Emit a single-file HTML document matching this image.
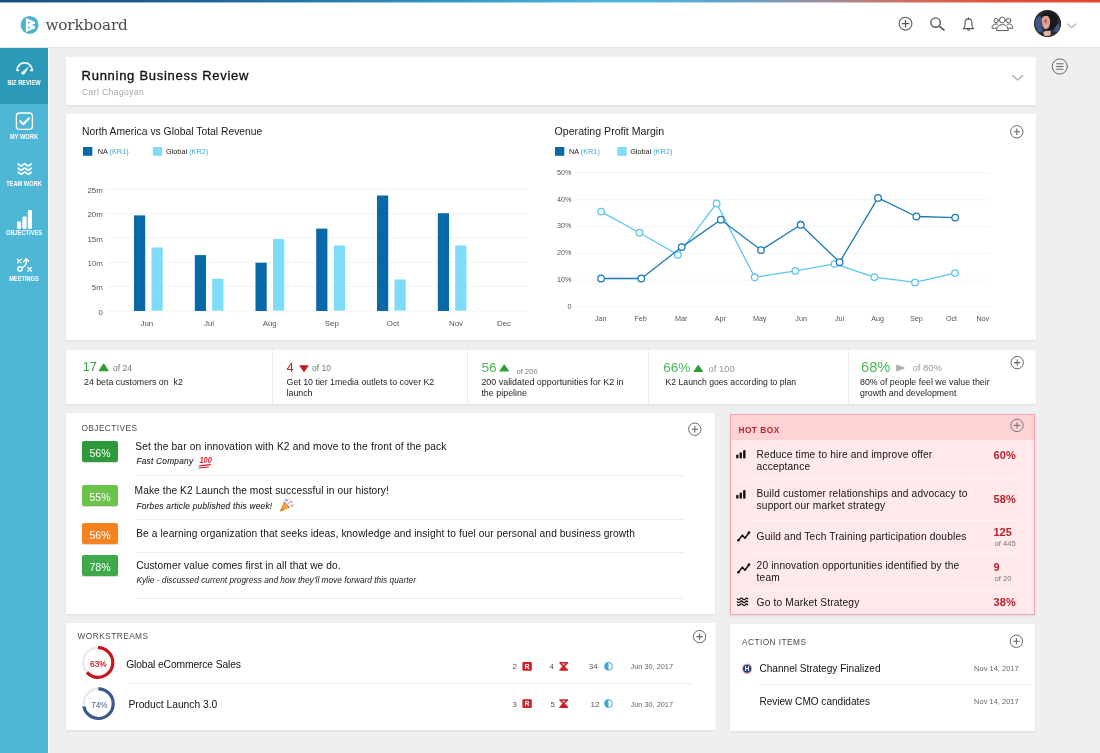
<!DOCTYPE html>
<html lang="en">
<head>
<meta charset="utf-8">
<title>Workboard - Running Business Review</title>
<style>
*{box-sizing:border-box;margin:0;padding:0}
html,body{width:1100px;height:753px;overflow:hidden}
body{background:#edeff1;font-family:"Liberation Sans",sans-serif;color:#222;position:relative}
.abs{position:absolute}
.t{position:absolute;white-space:nowrap;line-height:1}
#stripe{position:absolute;left:0;top:0;width:1100px;height:3px;background:linear-gradient(180deg,rgba(255,255,255,0) 2px,rgba(255,255,255,.55) 2px),linear-gradient(90deg,#174f80 0%,#1d6296 18%,#2c8abc 36%,#49b5dc 54%,#55aed6 62%,#6a9fc4 68%,#9a8e9c 75%,#cf6f60 82%,#e2503c 90%,#e8432c 100%)}
#header{position:absolute;left:0;top:3px;width:1100px;height:44px;background:#fff;box-shadow:0 1px 1px rgba(0,0,0,.04)}
#side{position:absolute;left:0;top:48px;width:48px;height:705px;background:#4fb7d6;box-shadow:1.500px 0 0 #f9fbfc}
#side .act{position:absolute;left:0;top:0;width:48px;height:56px;background:#2b9ab9}
.nav{position:absolute;left:0;width:48px;text-align:center;color:#fff;font-size:6.4px;font-weight:700;letter-spacing:0;transform:scaleX(.89);line-height:1;white-space:nowrap}
.panel{position:absolute;background:#fff;box-shadow:0 1px 2px rgba(0,0,0,.07)}
.kd{font-size:8.800px;line-height:10.500px;color:#1e1e1e}
.ko{color:#777}
.sh{font-size:8.300px;letter-spacing:.45px;color:#4a4a4a}
.bdg{position:absolute;left:82px;width:36px;height:21px;border-radius:2px;color:#fff;font-size:10.500px;line-height:24px;overflow:hidden;text-align:center;box-shadow:0 1px 1px rgba(0,0,0,.15)}
.ot{font-size:10.200px;letter-spacing:.15px;color:#141414}
.oi{font-size:8.300px;letter-spacing:.25px;font-style:italic;color:#222;-webkit-text-stroke:.1px #222}
.oi2{font-size:8.340px;font-style:italic;color:#222}
.hr{position:absolute;height:1px;background:#ededed}
.hr2{position:absolute;left:751px;width:269px;height:1px;background:#fff6f6}
.ht{font-size:10.200px;letter-spacing:.15px;line-height:12px;color:#141414}
.hp{font-size:11px;font-weight:700;color:#b8222e}
.hs{font-size:7.700px;color:#777}
</style>
</head>
<body>
<div id="root" style="position:absolute;left:0;top:0;width:1100px;height:753px;will-change:transform">
<div id="stripe"></div>
<div id="header"></div>
<!-- logo -->
<svg class="abs" style="left:19px;top:14px" width="22" height="22" viewBox="0 0 22 22">
  <circle cx="10.650" cy="10.900" r="9" fill="#4bb2d2"/>
  <path d="M6.900 3.900L16 8.100V9.700L12.600 11L16 12.300V14.200L6.900 18Z" fill="#fff"/>
  <path d="M8.900 7.700L12 8.750L8.900 9.700ZM8.900 12.500L12 13.400L8.900 14.500Z" fill="#4bb2d2"/>
</svg>
<div class="t" id="brand" style="left:45.5px;top:17.6px;font-family:'DejaVu Serif',serif;font-size:15.2px;color:#4a4a4a;letter-spacing:-0.15px">workboard</div>
<!-- header icons -->
<svg class="abs" style="left:890px;top:5px" width="200" height="40" viewBox="890 5 200 40" fill="none" stroke="#5a5a5a" stroke-width="1.1" stroke-linecap="round" stroke-linejoin="round">
  <circle cx="905.5" cy="23.7" r="6.4"/>
  <path d="M902.2 23.7H908.8M905.5 20.4V27" stroke-width="1.3"/>
  <circle cx="935.6" cy="22.6" r="4.7" stroke-width="1.4"/>
  <path d="M939.2 26.2L944 30" stroke-width="1.6"/>
  <path d="M963.3 28.6H973.7C972.3 27.6 971.9 26.3 971.9 24.6V22.6C971.9 20.4 970.5 18.9 968.5 18.9C966.5 18.9 965.1 20.4 965.1 22.6V24.6C965.1 26.3 964.7 27.6 963.3 28.6Z"/>
  <path d="M968.5 18.9V17.8M967.4 29.6C967.7 30.3 969.3 30.3 969.6 29.6"/>
  <g stroke-width="1">
  <circle cx="1002.4" cy="20" r="2.9"/>
  <path d="M996.6 30.2C996.6 26.6 998.8 24.6 1002.4 24.6C1006 24.6 1008.2 26.6 1008.2 30.2Z"/>
  <circle cx="996.2" cy="20.6" r="2.2"/>
  <path d="M997.4 24.3C996.9 24.1 996.5 24 996 24C993.4 24 992 25.6 992 28.2H996.2"/>
  <circle cx="1008.6" cy="20.6" r="2.2"/>
  <path d="M1007.4 24.3C1007.9 24.1 1008.3 24 1008.8 24C1011.4 24 1012.8 25.6 1012.8 28.2H1008.6"/>
  </g>
  <path d="M1067.6 24L1071.7 27.8L1075.8 24" stroke="#b9b9b9" stroke-width="1.3"/>
</svg>
<!-- avatar -->
<svg class="abs" style="left:1034.100px;top:9.900px;border-radius:50%;overflow:hidden" width="27.200" height="27.200" viewBox="0.100 0.100 27.200 27.200">
  <g>
    <rect width="28" height="28" fill="#2e2d31"/>
    <path d="M1.200 9.500C2.500 7.500 5 6 7.600 6.600L7 12L8.400 17.500L9 21.600L4.600 22.400C2.600 20 .8 14 1.200 9.500Z" fill="#3f5689"/>
    <path d="M24.800 13.400L26.400 19.600L23 22.600L19.400 21.200L22 16Z" fill="#3f5689"/>
    <path d="M7.800 9C8.400 6.600 11 5.400 13.600 5.800C16 7 16.600 10 16.300 13C16 16 14.800 18.400 12.400 19.200C10.600 19.400 9.400 18 8.800 16C8 14 7.400 11 7.800 9Z" fill="#dba08f"/>
    <path d="M9.400 22L12 21.200L16.800 20.600L16.600 25.600L10.400 26.400Z" fill="#e6b1a6"/>
    <path d="M7 8C7.400 3.600 12 .9 16.400 1.500C21 2.200 24 6 23.600 11C23.300 15 21 18.600 17.400 20.400L13.400 20.600L15.600 17C17 13.600 17 9.400 14.600 6.400C12 5.400 9 6.200 7 8Z" fill="#19181a"/>
    <path d="M10.200 10.200L13.400 9.600L12.300 13.600L10.800 12.600Z" fill="#b0362f" opacity=".7"/>
    <path d="M9.800 15.600C11 16.800 13 16.600 14 15.400" stroke="#fff" stroke-width=".7" fill="none" opacity=".7"/>
  </g>
  <circle cx="13.700" cy="13.700" r="13.200" fill="none" stroke="#333236" stroke-width=".9"/>
</svg>
<div id="side"><div class="act"></div></div>
<svg class="abs" style="left:0;top:48px" width="48" height="240" viewBox="0 48 48 240" fill="none" stroke="#fff" stroke-width="1.5" stroke-linecap="round" stroke-linejoin="round">
  <!-- gauge -->
  <path d="M18.600 70.400H16.900A7.700 7.700 0 0 1 32.300 70.400H30.600" stroke-width="1.600"/>
  <path d="M19.500 66.300l-.9-.6M21.900 64.100l-.5-.9M24.600 63.500v-1M27.400 64.100l.5-.9M29.800 66.300l.9-.6" stroke-width=".9"/>
  <path d="M28.300 67.400L24.300 74C23.500 75.200 21 74 21.700 72.500Z" fill="#fff" stroke-width=".5"/>
  <!-- check -->
  <rect x="16.400" y="113" width="16" height="16.400" rx="3.200" stroke-width="1.300"/>
  <path d="M20.300 121.200L23.300 124.200L29 118.200" stroke-width="2"/>
  <!-- waves -->
  <g stroke-width="1.700" stroke-linecap="butt">
  <path d="M17.500 163.9C18.700 163.9 19.900 166.0 21.100 166.0S23.500 163.9 24.700 163.9S27.100 166.0 28.300 166.0S30.700 163.9 31.800 163.9"/>
  <path d="M17.500 168.0C18.700 168.0 19.900 170.1 21.100 170.1S23.500 168.0 24.700 168.0S27.100 170.1 28.300 170.1S30.700 168.0 31.800 168.0"/>
  <path d="M17.500 172.1C18.700 172.1 19.900 174.2 21.100 174.2S23.500 172.1 24.700 172.1S27.100 174.2 28.300 174.2S30.700 172.1 31.800 172.1"/>
  </g>
  <!-- bars -->
  <g fill="#fff" stroke="none">
  <rect x="17" y="221.600" width="4.2" height="7.400" rx="1.4"/>
  <rect x="22.4" y="216.400" width="4.2" height="12.600" rx="1.4"/>
  <rect x="27.800" y="210" width="4.2" height="19" rx="1.4"/>
  </g>
  <!-- meetings -->
  <g stroke-width="1.400">
  <path d="M17.500 259.200l3.600 3.600M21.100 259.200l-3.600 3.600"/>
  <path d="M27.900 267.400l3.600 3.600M31.500 267.400l-3.600 3.600"/>
  <circle cx="20" cy="268.900" r="2.100"/>
  <path d="M21.900 267.800C25.400 266.400 26.900 263.600 26.300 259.400"/>
  <path d="M23.700 261.600L26.200 258.700L28.700 261.200"/>
  </g>
</svg>
<div class="nav" style="top:80px">BIZ REVIEW</div>
<div class="nav" style="top:134.400px">MY WORK</div>
<div class="nav" style="top:181.100px">TEAM WORK</div>
<div class="nav" style="top:230.200px">OBJECTIVES</div>
<div class="nav" style="top:276.400px">MEETINGS</div>

<!-- title panel -->
<div class="panel" style="left:66px;top:57px;width:970px;height:48px"></div>
<div class="t" id="ttl" style="left:81.6px;top:69px;font-size:13px;letter-spacing:.72px;color:#111;-webkit-text-stroke:.32px #111">Running Business Review</div>
<div class="t" id="sub" style="left:82px;top:87.6px;font-size:8.5px;letter-spacing:.42px;color:#a6a6a6">Carl Chagoyan</div>
<svg class="abs" style="left:1010px;top:58px" width="70" height="30" viewBox="1010 58 70 30" fill="none" stroke-linecap="round" stroke-linejoin="round">
  <path d="M1012.800 75.600L1017.700 80L1022.600 75.600" stroke="#b5b5b5" stroke-width="1.600"/>
  <circle cx="1059.8" cy="66.5" r="7.6" stroke="#666" stroke-width="1"/>
  <path d="M1056.6 63.8H1063M1056.6 66.5H1063M1056.6 69.200H1063" stroke="#666" stroke-width="1"/>
</svg>
<!-- charts panel -->
<div class="panel" style="left:66px;top:114px;width:970px;height:226px"></div>
<svg class="abs" id="charts" style="left:66px;top:114px" width="970" height="226" viewBox="66 114 970 226" font-family="Liberation Sans, sans-serif">
  <text x="82" y="134.800" font-size="10.350" fill="#1c1c1c">North America vs Global Total Revenue</text>
  <rect x="83" y="147" width="9.300" height="8.800" fill="#0869a8"/>
  <text x="97.800" y="154.400" font-size="7.300" fill="#222">NA <tspan fill="#3aa7d8">(KR1)</tspan></text>
  <rect x="152.800" y="147" width="9.300" height="8.800" fill="#7cdcf9"/>
  <text x="166" y="154.400" font-size="7.300" fill="#222">Global <tspan fill="#3aa7d8">(KR2)</tspan></text>
  <g stroke="#f2f2f2" stroke-width="1" fill="none"><path d="M108 310.9H528"/><path d="M108 286.6H528"/><path d="M108 262.3H528"/><path d="M108 237.9H528"/><path d="M108 213.6H528"/><path d="M108 189.3H528"/></g>
  <g font-size="7.900" fill="#555"><text x="102.800" y="314.5" text-anchor="end">0</text><text x="102.800" y="290.2" text-anchor="end">5m</text><text x="102.800" y="265.9" text-anchor="end">10m</text><text x="102.800" y="241.5" text-anchor="end">15m</text><text x="102.800" y="217.2" text-anchor="end">20m</text><text x="102.800" y="192.9" text-anchor="end">25m</text><text x="146.9" y="326" text-anchor="middle">Jun</text><text x="209" y="326" text-anchor="middle">Jul</text><text x="269.7" y="326" text-anchor="middle">Aug</text><text x="331.8" y="326" text-anchor="middle">Sep</text><text x="393" y="326" text-anchor="middle">Oct</text><text x="456" y="326" text-anchor="middle">Nov</text><text x="504" y="326" text-anchor="middle">Dec</text></g>
  <rect x="134.0" y="215.4" width="11.2" height="95.6" fill="#0869a8"/><rect x="151.5" y="247.5" width="11.2" height="63.1" fill="#7cdcf9"/><rect x="194.8" y="255.1" width="11.2" height="55.9" fill="#0869a8"/><rect x="212.2" y="278.8" width="11.2" height="31.8" fill="#7cdcf9"/><rect x="255.5" y="262.7" width="11.2" height="48.3" fill="#0869a8"/><rect x="273.0" y="239.1" width="11.2" height="71.5" fill="#7cdcf9"/><rect x="316.2" y="228.6" width="11.2" height="82.4" fill="#0869a8"/><rect x="333.8" y="245.5" width="11.2" height="65.1" fill="#7cdcf9"/><rect x="377.0" y="195.5" width="11.2" height="115.5" fill="#0869a8"/><rect x="394.5" y="279.5" width="11.2" height="31.1" fill="#7cdcf9"/><rect x="437.8" y="213.2" width="11.2" height="97.8" fill="#0869a8"/><rect x="455.2" y="245.5" width="11.2" height="65.1" fill="#7cdcf9"/>
  <text x="554.600" y="134.800" font-size="10.600" fill="#1c1c1c">Operating Profit Margin</text>
  <rect x="555" y="147" width="9.300" height="8.800" fill="#0869a8"/>
  <text x="569" y="154.400" font-size="7.300" fill="#222">NA <tspan fill="#3aa7d8">(KR1)</tspan></text>
  <rect x="617.300" y="147" width="9.300" height="8.800" fill="#7cdcf9"/>
  <text x="630.200" y="154.400" font-size="7.300" fill="#222">Global <tspan fill="#3aa7d8">(KR2)</tspan></text>
  <g stroke="#f5f5f5" stroke-width="1" fill="none"><path d="M576 306.8H990"/><path d="M576 280.1H990"/><path d="M576 253.3H990"/><path d="M576 226.6H990"/><path d="M576 199.8H990"/><path d="M576 173.1H990"/></g>
  <g font-size="7.200" fill="#555"><text x="571.500" y="308.5" text-anchor="end">0</text><text x="571.500" y="281.7" text-anchor="end">10%</text><text x="571.500" y="255.0" text-anchor="end">20%</text><text x="571.500" y="228.3" text-anchor="end">30%</text><text x="571.500" y="201.5" text-anchor="end">40%</text><text x="571.500" y="174.8" text-anchor="end">50%</text><text x="600.7" y="321.400" text-anchor="middle">Jan</text><text x="640.6" y="321.400" text-anchor="middle">Feb</text><text x="681.3" y="321.400" text-anchor="middle">Mar</text><text x="720.3" y="321.400" text-anchor="middle">Apr</text><text x="759.8" y="321.400" text-anchor="middle">May</text><text x="801.1" y="321.400" text-anchor="middle">Jun</text><text x="839.5" y="321.400" text-anchor="middle">Jul</text><text x="877.6" y="321.400" text-anchor="middle">Aug</text><text x="916.4" y="321.400" text-anchor="middle">Sep</text><text x="951.5" y="321.400" text-anchor="middle">Oct</text><text x="982.8" y="321.400" text-anchor="middle">Nov</text></g>
  <path d="M601.1 211.6L639.5 232.7L677.8 254.8L716.6 203.4L754.7 277.3L795.4 270.9L834.6 263.9L874.3 277.1L915 282.4L955 273.1" fill="none" stroke="#5cc6ef" stroke-width="1.300" stroke-linejoin="round"/>
  <circle cx="601.1" cy="211.6" r="3.300" fill="#fff" stroke="#5cc6ef" stroke-width="1.300"/><circle cx="639.5" cy="232.7" r="3.300" fill="#fff" stroke="#5cc6ef" stroke-width="1.300"/><circle cx="677.8" cy="254.8" r="3.300" fill="#fff" stroke="#5cc6ef" stroke-width="1.300"/><circle cx="716.6" cy="203.4" r="3.300" fill="#fff" stroke="#5cc6ef" stroke-width="1.300"/><circle cx="754.7" cy="277.3" r="3.300" fill="#fff" stroke="#5cc6ef" stroke-width="1.300"/><circle cx="795.4" cy="270.9" r="3.300" fill="#fff" stroke="#5cc6ef" stroke-width="1.300"/><circle cx="834.6" cy="263.9" r="3.300" fill="#fff" stroke="#5cc6ef" stroke-width="1.300"/><circle cx="874.3" cy="277.1" r="3.300" fill="#fff" stroke="#5cc6ef" stroke-width="1.300"/><circle cx="915" cy="282.4" r="3.300" fill="#fff" stroke="#5cc6ef" stroke-width="1.300"/><circle cx="955" cy="273.1" r="3.300" fill="#fff" stroke="#5cc6ef" stroke-width="1.300"/>
  <path d="M601.1 278.5L641.3 278.5L681.7 247.1L720.8 219.7L761 250.1L800.7 224.8L839.6 262.2L878 197.9L916.4 216.5L955.2 217.6" fill="none" stroke="#1b7bb6" stroke-width="1.300" stroke-linejoin="round"/>
  <circle cx="601.1" cy="278.5" r="3.300" fill="#fff" stroke="#1b7bb6" stroke-width="1.300"/><circle cx="641.3" cy="278.5" r="3.300" fill="#fff" stroke="#1b7bb6" stroke-width="1.300"/><circle cx="681.7" cy="247.1" r="3.300" fill="#fff" stroke="#1b7bb6" stroke-width="1.300"/><circle cx="720.8" cy="219.7" r="3.300" fill="#fff" stroke="#1b7bb6" stroke-width="1.300"/><circle cx="761" cy="250.1" r="3.300" fill="#fff" stroke="#1b7bb6" stroke-width="1.300"/><circle cx="800.7" cy="224.8" r="3.300" fill="#fff" stroke="#1b7bb6" stroke-width="1.300"/><circle cx="839.6" cy="262.2" r="3.300" fill="#fff" stroke="#1b7bb6" stroke-width="1.300"/><circle cx="878" cy="197.9" r="3.300" fill="#fff" stroke="#1b7bb6" stroke-width="1.300"/><circle cx="916.4" cy="216.5" r="3.300" fill="#fff" stroke="#1b7bb6" stroke-width="1.300"/><circle cx="955.2" cy="217.6" r="3.300" fill="#fff" stroke="#1b7bb6" stroke-width="1.300"/>
  <circle cx="1016.800" cy="131.800" r="6.200" fill="none" stroke="#666" stroke-width="1"/>
  <path d="M1013.600 131.800H1020M1016.800 128.600V135" stroke="#666" stroke-width="1.100" fill="none"/>
</svg>
<!-- kpi panel -->
<div class="panel" style="left:66px;top:350px;width:970px;height:54px"></div>
<div class="abs" style="left:272px;top:350px;width:1px;height:54px;background:#ececec"></div>
<div class="abs" style="left:467px;top:350px;width:1px;height:54px;background:#ececec"></div>
<div class="abs" style="left:648px;top:350px;width:1px;height:54px;background:#ececec"></div>
<div class="abs" style="left:848px;top:350px;width:1px;height:54px;background:#ececec"></div>
<svg class="abs" style="left:66px;top:350px" width="970" height="54" viewBox="66 350 970 54">
  <path d="M103.700 364.200L108 370.600H99.400Z" fill="#2f9e3a" stroke="#2f9e3a" stroke-width="1.200" stroke-linejoin="round"/>
  <path d="M304 371.400L300.200 365.800H307.800Z" fill="#c0202a" stroke="#c0202a" stroke-width="1.200" stroke-linejoin="round"/>
  <path d="M504.200 365L508.400 371H500Z" fill="#2f9e3a" stroke="#2f9e3a" stroke-width="1.200" stroke-linejoin="round"/>
  <path d="M698.300 365.600L702.400 371.400H694.200Z" fill="#2f9e3a" stroke="#2f9e3a" stroke-width="1.200" stroke-linejoin="round"/>
  <path d="M896.600 365L904.400 368L896.600 371Z" fill="#b3b3b3" stroke="#b3b3b3" stroke-width="1" stroke-linejoin="round"/>
  <circle cx="1017.200" cy="362.600" r="6.200" fill="none" stroke="#666" stroke-width="1"/>
  <path d="M1014 362.600H1020.400M1017.200 359.400V365.800" stroke="#666" stroke-width="1.100" fill="none"/>
</svg>
<div class="t kn" style="left:82.800px;top:360.700px;font-size:12.700px;color:#35a343">17</div>
<div class="t ko" style="left:113px;top:363.600px;font-size:8.600px">of 24</div>
<div class="t kd" style="left:84px;top:377px">24 beta customers on&nbsp; k2</div>
<div class="t kn" style="left:286.600px;top:360.500px;font-size:13px;color:#c0202a">4</div>
<div class="t ko" style="left:312px;top:363.600px;font-size:8.600px">of 10</div>
<div class="t kd" style="left:286.600px;top:377px">Get 10 tier 1media outlets to cover K2<br>launch</div>
<div class="t kn" style="left:481.400px;top:361px;font-size:13.700px;color:#4cb85a">56</div>
<div class="t ko" style="left:516.600px;top:367.900px;font-size:7.600px">of 200</div>
<div class="t kd" style="left:481.400px;top:377px;font-size:8.920px">200 validated opportunities for K2 in<br>the pipeline</div>
<div class="t kn" style="left:663.200px;top:360.600px;font-size:13.600px;color:#4cb85a">66%</div>
<div class="t ko" style="left:708.600px;top:364.200px;font-size:9.400px;color:#9a9a9a">of 100</div>
<div class="t kd" style="left:665.600px;top:377px;font-size:8.650px">K2 Launch goes according to plan</div>
<div class="t kn" style="left:861px;top:359.700px;font-size:14.700px;color:#4cb85a">68%</div>
<div class="t ko" style="left:912.400px;top:362.700px;font-size:9.550px;color:#9a9a9a">of 80%</div>
<div class="t kd" style="left:860px;top:377px">80% of people feel we value their<br>growth and development</div>
<!-- objectives -->
<div class="panel" style="left:66px;top:413px;width:649px;height:201px"></div>
<div class="t sh" style="left:81.400px;top:424px">OBJECTIVES</div>
<svg class="abs" style="left:686px;top:420px" width="18" height="18" viewBox="686 420 18 18" fill="none" stroke="#666"><circle cx="694.800" cy="429.200" r="6.200" stroke-width="1"/><path d="M691.600 429.200H698M694.800 426V432.400" stroke-width="1.100"/></svg>
<div class="bdg" style="top:441.400px;background:#2e9a3c">56%</div>
<div class="bdg" style="top:484.800px;background:#6cc24a">55%</div>
<div class="bdg" style="top:522.800px;background:#f5821f">56%</div>
<div class="bdg" style="top:555.200px;background:#3fa84b">78%</div>
<div class="t ot" style="left:135.200px;top:441.600px">Set the bar on innovation with K2 and move to the front of the pack</div>
<div class="t oi" style="left:136.400px;top:456.600px">Fast Company</div>
<div class="t ot" style="left:134.600px;top:485.800px;letter-spacing:.085px">Make the K2 Launch the most successful in our history!</div>
<div class="t oi" style="left:136.400px;top:502.300px">Forbes article published this week!</div>
<div class="t ot" style="left:136.200px;top:528.900px;letter-spacing:.105px">Be a learning organization that seeks ideas, knowledge and insight to fuel our personal and business growth</div>
<div class="t ot" style="left:136.200px;top:560.800px;letter-spacing:.105px">Customer value comes first in all that we do.</div>
<div class="t oi2" style="left:136.400px;top:575.600px">Kylie - discussed current progress and how they&#8217;ll move forward this quarter</div>
<div class="hr" style="left:136px;top:474.500px;width:548px"></div>
<div class="hr" style="left:136px;top:518.800px;width:548px"></div>
<div class="hr" style="left:136px;top:552.200px;width:548px"></div>
<div class="hr" style="left:136px;top:598px;width:548px"></div>
<!-- 100 emoji -->
<svg class="abs" style="left:198px;top:453px" width="16" height="17" viewBox="0 0 16 17">
  <text x="1.400" y="10.200" font-family="Liberation Sans, sans-serif" font-size="9.500" font-weight="700" font-style="italic" fill="#d8232f" textLength="12.400" lengthAdjust="spacingAndGlyphs">100</text>
  <path d="M1.400 12.800L12.400 11.600M1 15L10.400 14" stroke="#d8232f" stroke-width="1.200" stroke-linecap="round" fill="none"/>
</svg>
<!-- party popper -->
<svg class="abs" style="left:279px;top:498px" width="16" height="15" viewBox="0 0 16 15">
  <path d="M1 13.600L4.600 4.400L10.200 10Z" fill="#f0a030"/>
  <path d="M2.200 10.600L5.600 12L1 13.600Z" fill="#d97a18"/>
  <path d="M4.600 4.400C6.800 5 9.400 7.600 10.200 10" stroke="#c0392b" stroke-width="1" fill="none"/>
  <circle cx="8" cy="2.400" r=".8" fill="#3b8fd9"/><circle cx="12.600" cy="4" r=".8" fill="#e8443a"/><circle cx="13.600" cy="8.600" r=".7" fill="#6cc24a"/><circle cx="10.400" cy="1.400" r=".6" fill="#f2c230"/>
  <path d="M9.400 5.600L11.400 3.200M11.400 7.800L14.200 6.600M6.400 3L6.800 1" stroke="#b25fd0" stroke-width=".8" stroke-linecap="round"/>
</svg>
<!-- hot box -->
<div class="abs" id="hot" style="left:730px;top:414px;width:305px;height:201px;background:#ffe9ea;border:1px solid #f3a6ad;box-shadow:0 1px 2px rgba(200,60,70,.15)"><div style="height:25px;background:#ffd3d6"></div></div>
<div class="t" style="left:738.400px;top:425.800px;font-size:8.300px;font-weight:700;letter-spacing:.5px;color:#bf1f2c">HOT BOX</div>
<svg class="abs" style="left:730px;top:414px" width="305" height="201" viewBox="730 414 305 201" fill="#111">
  <circle cx="1017" cy="425.400" r="6.200" fill="none" stroke="#777" stroke-width="1"/><path d="M1013.800 425.400H1020.200M1017 422.200V428.600" stroke="#777" stroke-width="1.100" fill="none"/>
  <rect x="736.200" y="454.5" width="2.300" height="4" rx="1"/><rect x="739.600" y="452.3" width="2.300" height="6.200" rx="1"/><rect x="743.100" y="449.9" width="2.400" height="8.600" rx="1"/><rect x="736.200" y="494.7" width="2.300" height="4" rx="1"/><rect x="739.600" y="492.5" width="2.300" height="6.200" rx="1"/><rect x="743.100" y="490.1" width="2.400" height="8.600" rx="1"/><path d="M738.400 540.3L742.400 535.1L745 538.3L749 532.5" fill="none" stroke="#111" stroke-width="1.500" stroke-linejoin="round"/><circle cx="738.400" cy="540.3" r="1.300"/><circle cx="749" cy="532.5" r="1.300"/><path d="M738.400 572.3L742.400 567.1L745 570.3L749 564.5" fill="none" stroke="#111" stroke-width="1.500" stroke-linejoin="round"/><circle cx="738.400" cy="572.3" r="1.300"/><circle cx="749" cy="564.5" r="1.300"/><path d="M737.400 598.9c.9 1.100 1.800 1.100 2.700 0s1.800-1.100 2.700 0s1.800 1.100 2.700 0s1.500-.900 2.200-.200" fill="none" stroke="#111" stroke-width="1.300" stroke-linecap="round"/><path d="M737.400 601.8c.9 1.100 1.800 1.100 2.700 0s1.800-1.100 2.700 0s1.800 1.100 2.700 0s1.500-.900 2.200-.200" fill="none" stroke="#111" stroke-width="1.300" stroke-linecap="round"/><path d="M737.400 604.7c.9 1.100 1.800 1.100 2.700 0s1.800-1.100 2.700 0s1.800 1.100 2.700 0s1.500-.900 2.200-.200" fill="none" stroke="#111" stroke-width="1.300" stroke-linecap="round"/>
</svg>
<div class="hr2" style="top:478px"></div>
<div class="hr2" style="top:519.600px"></div>
<div class="hr2" style="top:552.800px"></div>
<div class="hr2" style="top:590.200px"></div>
<div class="t ht" style="left:756.600px;top:448.800px">Reduce time to hire and improve offer<br>acceptance</div>
<div class="t ht" style="left:756.600px;top:487.800px">Build customer relationships and advocacy to<br>support our market strategy</div>
<div class="t ht" style="left:756.600px;top:531px">Guild and Tech Training participation doubles</div>
<div class="t ht" style="left:756.600px;top:560px">20 innovation opportunities identified by the<br>team</div>
<div class="t ht" style="left:756.600px;top:597.400px">Go to Market Strategy</div>
<div class="t hp" style="left:993.400px;top:450.200px;letter-spacing:.2px">60%</div>
<div class="t hp" style="left:993.400px;top:493.700px;letter-spacing:.2px">58%</div>
<div class="t hp" style="left:993.400px;top:526.700px">125</div>
<div class="t hs" style="left:994.500px;top:540.100px">of 445</div>
<div class="t hp" style="left:993.400px;top:561.600px">9</div>
<div class="t hs" style="left:994.500px;top:574.600px">of 20</div>
<div class="t hp" style="left:993.400px;top:597px;letter-spacing:.2px">38%</div>
<!-- workstreams -->
<div class="panel" style="left:66px;top:623px;width:650px;height:107px"></div>
<div class="t sh" style="left:77.600px;top:631.700px">WORKSTREAMS</div>
<svg class="abs" style="left:66px;top:623px" width="649" height="107" viewBox="66 623 649 107" font-family="Liberation Sans, sans-serif">
  <circle cx="699.600" cy="636.600" r="6.200" fill="none" stroke="#666" stroke-width="1"/><path d="M696.400 636.600H702.800M699.600 633.400V639.800" stroke="#666" stroke-width="1.100" fill="none"/>
  <circle cx="98" cy="662.5" r="14.8" fill="none" stroke="#e9ebf1" stroke-width="2.600"/><circle cx="98" cy="662.5" r="14.8" fill="none" stroke="#c8161e" stroke-width="3.200" stroke-dasharray="58.58 92.99" transform="rotate(-90 98 662.5)"/>
  <circle cx="98.4" cy="703.7" r="14.8" fill="none" stroke="#e9ebf1" stroke-width="2.600"/><circle cx="98.4" cy="703.7" r="14.8" fill="none" stroke="#3b5a8c" stroke-width="3.200" stroke-dasharray="66.49 92.99" transform="rotate(-90 98.4 703.7)"/>
  <text x="98.300" y="666.500" font-size="8.200" fill="#c8161e" text-anchor="middle" stroke="#c8161e" stroke-width=".2">63%</text>
  <text x="99.400" y="707.600" font-size="8.200" fill="#4a5a78" text-anchor="middle">74%</text>
  <rect x="522.4" y="662" width="9.400" height="8.800" rx="1" fill="#d0202a"/><text x="527.1" y="668.9" font-size="6.500" font-weight="700" fill="#fff" text-anchor="middle">R</text><path d="M559.4 662H568.0V663.2L565.0 666.4L568.0 669.6V670.8H559.4V669.6L562.4 666.4L559.4 663.2Z" fill="#d0202a"/><path d="M561.6 663.6H565.8L563.6999999999999 665.6Z" fill="#fff" opacity=".7"/><circle cx="608.5" cy="666.3" r="3.900" fill="#fff" stroke="#3fa9d6" stroke-width="1"/><path d="M608.5 662.4A3.900 3.900 0 0 0 608.5 670.1999999999999Z" fill="#3fa9d6"/>
  <rect x="522.4" y="699.2" width="9.400" height="8.800" rx="1" fill="#d0202a"/><text x="527.1" y="706.1" font-size="6.500" font-weight="700" fill="#fff" text-anchor="middle">R</text><path d="M559.4 699.2H568.0V700.4000000000001L565.0 703.6L568.0 706.8000000000001V708.0H559.4V706.8000000000001L562.4 703.6L559.4 700.4000000000001Z" fill="#d0202a"/><path d="M561.6 700.8000000000001H565.8L563.6999999999999 702.8000000000001Z" fill="#fff" opacity=".7"/><circle cx="608.5" cy="703.5" r="3.900" fill="#fff" stroke="#3fa9d6" stroke-width="1"/><path d="M608.5 699.6A3.900 3.900 0 0 0 608.5 707.4Z" fill="#3fa9d6"/>
  <g font-size="8" fill="#555">
  <text x="512.600" y="669.300">2</text><text x="549.600" y="669.300">4</text><text x="588.700" y="669.300">34</text>
  <text x="512.600" y="706.500">3</text><text x="550.400" y="706.500">5</text><text x="590.600" y="706.500">12</text>
  </g>
  <g font-size="7.350" fill="#666"><text x="630.500" y="669.300">Jun 30, 2017</text><text x="630.500" y="706.500">Jun 30, 2017</text></g>
</svg>
<div class="t" style="left:126.200px;top:660.200px;font-size:10.300px;letter-spacing:-.12px;color:#141414">Global eCommerce Sales</div>
<div class="t" style="left:128.400px;top:699.800px;font-size:10.300px;letter-spacing:-.03px;color:#141414">Product Launch 3.0</div>
<div class="hr" style="left:128px;top:683px;width:564px"></div>
<!-- action items -->
<div class="panel" style="left:730px;top:624px;width:304.500px;height:107px"></div>
<div class="t sh" style="left:742px;top:638.100px">ACTION ITEMS</div>
<svg class="abs" style="left:730px;top:624px" width="305" height="106" viewBox="730 624 305 106" font-family="Liberation Sans, sans-serif">
  <circle cx="1016.400" cy="641.300" r="6.200" fill="none" stroke="#666" stroke-width="1"/><path d="M1013.200 641.300H1019.600M1016.400 638.100V644.500" stroke="#666" stroke-width="1.100" fill="none"/>
  <circle cx="747.100" cy="668.700" r="4.600" fill="#23407a" stroke="#e9a3ab" stroke-width="1.200"/>
  <text x="747.100" y="671" font-size="6.400" font-weight="700" fill="#fff" text-anchor="middle">H</text>
  <g font-size="7.500" fill="#666"><text x="974.100" y="671">Nov 14, 2017</text><text x="974.100" y="703.900">Nov 14, 2017</text></g>
</svg>
<div class="t" style="left:759.400px;top:664.400px;font-size:10.100px;color:#141414">Channel Strategy Finalized</div>
<div class="t" style="left:759.400px;top:697.100px;font-size:10.050px;color:#141414">Review CMO candidates</div>
<div class="hr" style="left:759px;top:683.800px;width:273px"></div>
</div>
</body>
</html>
